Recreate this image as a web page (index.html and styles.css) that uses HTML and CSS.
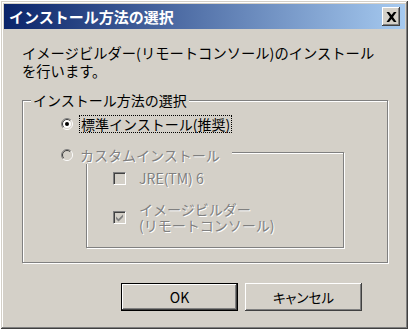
FILE: index.html
```html
<!DOCTYPE html>
<html lang="ja">
<head>
<meta charset="utf-8">
<link rel="stylesheet" href="styles.css">
</head>
<body>
<div class="window">
  <div class="titlebar">
    <span class="title">インストール方法の選択</span>
    <span class="close">
      <svg width="11" height="10" viewBox="0 0 11 10"><path d="M0.5 0h2.6l2.4 3 2.4-3h2.6L7 5l3.5 5H7.9L5.5 7 3.1 10H0.5L4 5z" fill="#000"/></svg>
    </span>
  </div>
  <div class="content">
    <p class="intro">イメージビルダー(リモートコンソール)のインストール<br>を行います。</p>
    <div class="group">
      <span class="legend">インストール方法の選択</span>
      <div class="row">
        <svg class="radio" width="12" height="12" viewBox="0 0 12 12">
          <circle cx="6" cy="6" r="5" fill="#fff"/>
          <path d="M9.9 2.1A5.5 5.5 0 0 0 2.1 9.9" stroke="#808080" fill="none"/>
          <path d="M2.1 9.9A5.5 5.5 0 0 0 9.9 2.1" stroke="#fff" fill="none"/>
          <path d="M9.2 2.8A4.5 4.5 0 0 0 2.8 9.2" stroke="#404040" fill="none"/>
          <path d="M2.8 9.2A4.5 4.5 0 0 0 9.2 2.8" stroke="#d4d0c8" fill="none"/>
          <circle cx="6" cy="6" r="2" fill="#000"/>
        </svg>
        <span class="focus">標準インストール(推奨)</span>
      </div>
      <div class="subgroup">
        <div class="row sublegend">
          <svg class="radio" width="12" height="12" viewBox="0 0 12 12">
            <circle cx="6" cy="6" r="5" fill="#d4d0c8"/>
            <path d="M9.9 2.1A5.5 5.5 0 0 0 2.1 9.9" stroke="#808080" fill="none"/>
            <path d="M2.1 9.9A5.5 5.5 0 0 0 9.9 2.1" stroke="#fff" fill="none"/>
            <path d="M9.2 2.8A4.5 4.5 0 0 0 2.8 9.2" stroke="#404040" fill="none"/>
            <path d="M2.8 9.2A4.5 4.5 0 0 0 9.2 2.8" stroke="#d4d0c8" fill="none"/>
          </svg>
          <span class="disabled">カスタムインストール</span>
        </div>
        <div class="check-row">
          <span class="checkbox"></span>
          <span class="disabled">JRE(TM) 6</span>
        </div>
        <div class="check-row two">
          <span class="checkbox">
            <svg width="9" height="9" viewBox="0 0 9 9"><path d="M1 3.5l2.5 2.5L8 1.5v2.5L3.5 8.5 1 6z" fill="#808080"/></svg>
          </span>
          <span class="disabled">イメージビルダー<br>(リモートコンソール)</span>
        </div>
      </div>
    </div>
    <div class="buttons">
      <button class="btn default">OK</button>
      <button class="btn narrow">キャンセル</button>
    </div>
  </div>
</div>
</body>
</html>
```
FILE: styles.css
```css
html, body {
  margin: 0;
  padding: 0;
  background: #ffffff;
}
body {
  font-family: "Noto Sans CJK JP", "Liberation Sans", sans-serif;
  color: #000;
}
.window {
  margin: 1px 0 0 1px;
  width: 407px;
  height: 328px;
  box-sizing: border-box;
  padding: 3px;
  background: #d4d0c8;
  box-shadow: inset -1px -1px 0 #404040, inset 1px 1px 0 #d4d0c8,
              inset -2px -2px 0 #808080, inset 2px 2px 0 #ffffff;
}
.titlebar {
  height: 25px;
  display: flex;
  align-items: center;
  justify-content: space-between;
  padding: 0 5px 0 5px;
  background: linear-gradient(to right, #0a246a, #a6caf0);
}
.title {
  color: #fff;
  font-weight: bold;
  font-size: 15px;
  line-height: 25px;
  white-space: nowrap;
}
.close {
  width: 18px;
  height: 19px;
  box-sizing: border-box;
  display: flex;
  align-items: center;
  justify-content: center;
  background: #d4d0c8;
  box-shadow: inset -1px -1px 0 #404040, inset 1px 1px 0 #ffffff,
              inset -2px -2px 0 #808080;
}
.content {
  padding: 15px 0 0 18px;
}
.intro {
  margin: 0;
  font-size: 14.3px;
  line-height: 18px;
  white-space: nowrap;
}
.group {
  position: relative;
  margin-top: 20px;
  width: 366px;
  height: 163px;
  box-sizing: border-box;
  border: 1px solid #808080;
  box-shadow: inset 1px 1px 0 #fff, 1px 1px 0 #fff;
  padding: 14px 0 0 38px;
}
.legend {
  position: absolute;
  left: 8px;
  top: -10px;
  padding: 0 2px;
  background: #d4d0c8;
  font-size: 14px;
  line-height: 18px;
  white-space: nowrap;
}
.row {
  display: flex;
  align-items: center;
  height: 18px;
  font-size: 14px;
  white-space: nowrap;
}
.radio {
  flex: none;
  margin-right: 7px;
}
.focus {
  outline: 1px dotted #000;
  padding: 0 1px;
  line-height: 16px;
}
.disabled {
  color: #808080;
  text-shadow: 1px 1px 0 #fff;
}
.subgroup {
  position: relative;
  margin: 19px 0 0 25px;
  width: 258px;
  height: 96px;
  box-sizing: border-box;
  border: 1px solid #808080;
  box-shadow: inset 1px 1px 0 #fff, 1px 1px 0 #fff;
  padding: 16px 0 0 26px;
}
.sublegend {
  position: absolute;
  left: -26px;
  top: -7px;
  padding-right: 12px;
  background: #d4d0c8;
}
.check-row {
  display: flex;
  align-items: center;
  height: 18px;
  font-size: 14px;
  white-space: nowrap;
}
.check-row.two {
  margin-top: 14px;
  height: auto;
  line-height: 16px;
}
.checkbox {
  flex: none;
  width: 13px;
  height: 13px;
  box-sizing: border-box;
  margin-right: 13px;
  border: 1px solid;
  border-color: #808080 #fff #fff #808080;
  box-shadow: inset 1px 1px 0 #404040, inset -1px -1px 0 #d4d0c8;
  background: #d4d0c8;
  display: flex;
  align-items: center;
  justify-content: center;
}
.buttons {
  display: flex;
  gap: 7px;
  margin: 20px 0 0 99px;
}
.btn {
  width: 117px;
  height: 28px;
  margin: 0;
  padding: 0;
  border: none;
  background: #d4d0c8;
  font-family: "Noto Sans CJK JP", "Liberation Sans", sans-serif;
  font-size: 14px;
  color: #000;
  box-shadow: inset -1px -1px 0 #404040, inset 1px 1px 0 #ffffff,
              inset -2px -2px 0 #808080;
}
.btn.narrow {
  font-size: 13.5px;
  font-feature-settings: "palt";
}
.btn.default {
  border: 1px solid #000;
  box-shadow: inset -1px -1px 0 #404040, inset 1px 1px 0 #ffffff,
              inset -2px -2px 0 #808080;
}
```
